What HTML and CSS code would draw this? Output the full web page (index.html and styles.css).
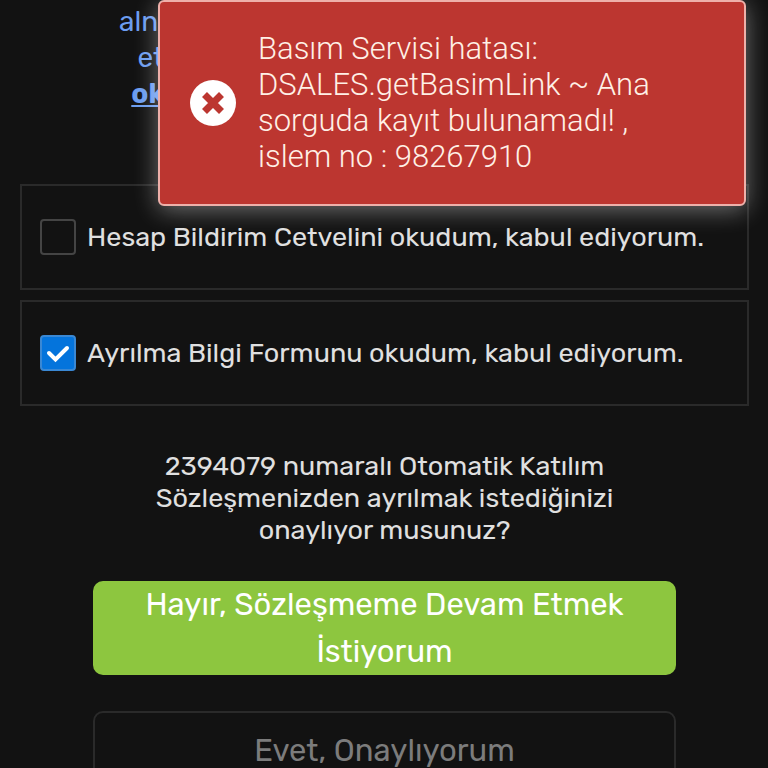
FILE: index.html
```
<!DOCTYPE html>
<html lang="tr">
<head>
<meta charset="UTF-8">
<meta name="viewport" content="width=device-width, initial-scale=1.0">
<title>Sözleşme Ayrılma Onayı</title>
<link rel="stylesheet" href="styles.css">
</head>
<body>

<div class="toast" role="alert">
  <svg class="toast-icon" viewBox="0 0 46 46" aria-hidden="true">
    <circle cx="23" cy="23" r="23" fill="#fff"/>
    <path d="M14.500 14.500L31.500 31.500M31.500 14.500L14.500 31.500" stroke="#bc3630" stroke-width="7"/>
  </svg>
  <p class="toast-text">Basım Servisi hatası:<br>DSALES.getBasimLink ~ Ana<br>sorguda kayıt bulunamadı! ,<br>islem no : 98267910</p>
</div>

<main class="page">
  <p class="info">
    alnan tüm bilgilendirme formlarını kabulü<br>
    etmek için lütfen belgeyi açarak metni<br>
    <a href="#">okuyunuz ve ardından onay verebilin</a>
  </p>

  <form class="form">
    <div class="consent">
      <input type="checkbox" id="hesap">
      <label for="hesap">Hesap Bildirim Cetvelini okudum, kabul ediyorum.</label>
    </div>
    <div class="consent">
      <input type="checkbox" id="ayrilma" checked>
      <label for="ayrilma">Ayrılma Bilgi Formunu okudum, kabul ediyorum.</label>
    </div>

    <p class="question">2394079 numaralı Otomatik Katılım<br>Sözleşmenizden ayrılmak istediğinizi<br>onaylıyor musunuz?</p>

    <div class="actions">
      <button type="button" class="btn btn-green">Hayır, Sözleşmeme Devam Etmek<br>İstiyorum</button>
      <button type="button" class="btn btn-outline">Evet, Onaylıyorum</button>
    </div>
  </form>
</main>

</body>
</html>
```
FILE: styles.css
```
* {
    box-sizing: border-box;
}
body {
    margin: 0;
    background-color: #121212;
    color: #e0e0e0;
    font-family: Rubik, Roboto, "Liberation Sans", sans-serif;
    font-size: 27px;
}
p {
    margin: 0;
}
.page {
    padding: 4px 19px 20px 20px;
}
.info {
    height: 180px;
    font-size: 28px;
    line-height: 36px;
    text-align: center;
    white-space: nowrap;
    color: #6c9df0;
}
.info a {
    color: inherit;
    font-weight: 700;
}

/* hata bildirimi */
.toast {
    position: absolute;
    top: 0;
    left: 158px;
    right: 22px;
    z-index: 10;
    display: flex;
    align-items: center;
    gap: 22px;
    padding: 29px 30px;
    background-color: #bc3630;
    border: 2px solid #eeb0aa;
    border-radius: 6px;
    box-shadow: 0 4px 24px rgba(255, 255, 255, .4);
}
.toast-icon {
    flex: none;
    width: 46px;
    height: 46px;
}
.toast-text {
    font-family: Roboto, sans-serif;
    font-size: 31px;
    font-weight: 300;
    line-height: 36px;
    color: #fff0e6;
    white-space: nowrap;
}

.consent {
    display: flex;
    align-items: center;
    gap: 11px;
    padding: 33px 18px;
    margin-bottom: 10px;
    border: 2px solid #2a2a2a;
}
.consent input {
    appearance: none;
    flex: none;
    width: 36px;
    height: 36px;
    margin: 0;
    border: 2px solid #444;
    border-radius: 4px;
}
.consent input:checked {
    border-color: #3a88d4;
    background: #0474dc url("data:image/svg+xml,%3Csvg xmlns='http://www.w3.org/2000/svg' viewBox='0 0 32 32'%3E%3Cpath d='M7 16l6.500 6.500L25 11' fill='none' stroke='white' stroke-width='4' stroke-linecap='round'/%3E%3C/svg%3E") center / 32px no-repeat;
}
.consent label {
    line-height: 36px;
    white-space: nowrap;
}

.question {
    margin-top: 44px;
    line-height: 32px;
    text-align: center;
}
.actions {
    display: flex;
    flex-direction: column;
    gap: 36px;
    width: 80%;
    margin: 35px auto 0;
}
.btn {
    width: 100%;
    padding: 0;
    border: 0;
    border-radius: 10px;
    font-family: inherit;
    font-size: 31px;
    line-height: 47px;
    cursor: pointer;
}
.btn-green {
    background-color: #8dc63f;
    color: #fff;
}
.btn-outline {
    padding: 14px 0;
    border: 2px solid #2a2a2a;
    background-color: transparent;
    color: #7c7c7c;
}
```
